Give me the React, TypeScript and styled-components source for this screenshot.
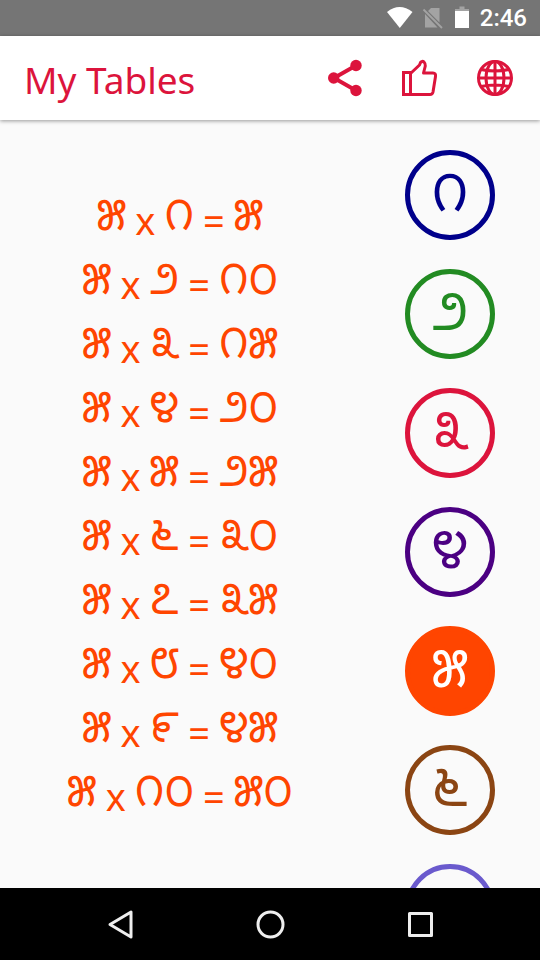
import React, { useState } from "react";
import styled, { createGlobalStyle } from "styled-components";

const GlobalStyle = createGlobalStyle`
  * { box-sizing: border-box; }
  body { margin: 0; background: #fafafa; }
  button { font: inherit; color: inherit; background: none; border: 0; padding: 0; cursor: pointer; }
  svg { display: block; }
`;

const Screen = styled.div`
  display: flex;
  flex-direction: column;
  height: 100vh;
  background: #fafafa;
  font-family: Roboto, "Noto Sans", sans-serif;
`;

const StatusBar = styled.div`
  flex: none;
  display: flex;
  align-items: center;
  justify-content: flex-end;
  height: 36px;
  padding-right: 13px;
  background: #757575;
  color: #fff;
`;

const StatusIcons = styled.div`
  display: flex;
  align-items: center;
  gap: 8px;
  margin-right: 8px;
`;

const Clock = styled.time`
  font-size: 24px;
  line-height: 36px;
  font-weight: 500;
`;

const Header = styled.header`
  flex: none;
  display: flex;
  align-items: center;
  justify-content: space-between;
  height: 84px;
  padding: 0 25px 0 24px;
  background: #fff;
  box-shadow: 0 1px 4px rgba(0, 0, 0, 0.4);
  color: #dc143c;
  z-index: 1;
`;

const Title = styled.h1`
  margin: 0;
  padding-top: 4px;
  font-family: "Noto Sans", sans-serif;
  font-size: 37px;
  line-height: 80px;
  font-weight: 400;
`;

const Actions = styled.div`
  display: flex;
  gap: 35px;
`;

const ActionButton = styled.button`
  width: 40px;
  height: 40px;
`;

const Content = styled.main`
  flex: 1;
  min-height: 0;
  display: grid;
  grid-template-columns: 2fr 1fr;
`;

const Equations = styled.section`
  display: flex;
  flex-direction: column;
  justify-content: center;
  color: #ff4500;
`;

const Equation = styled.p`
  display: flex;
  justify-content: center;
  align-items: center;
  gap: 9px;
  height: 64px;
  margin: 0;
`;

const Digits = styled.span`
  padding-top: 16px;
  font-family: "Noto Sans Kannada", "Noto Sans", sans-serif;
  font-size: 43px;
  line-height: 64px;
  font-weight: 400;
`;

const Sign = styled.span`
  padding-top: 8px;
  font-family: "Noto Sans", sans-serif;
  font-size: 38px;
  line-height: 56px;
`;

const Picker = styled.nav`
  display: flex;
  flex-direction: column;
  align-items: center;
  gap: 29px;
  padding: 30px 0;
  overflow-y: auto;
  scrollbar-width: none;
`;

const NumberButton = styled.button<{ $color: string; $active: boolean }>`
  && {
    flex: none;
    width: 90px;
    height: 90px;
    padding-top: 18px;
    border: 5px solid ${(p) => p.$color};
    border-radius: 50%;
    background: ${(p) => (p.$active ? p.$color : "transparent")};
    color: ${(p) => (p.$active ? "#fff" : p.$color)};
    font-family: "Noto Sans Kannada", "Noto Sans", sans-serif;
    font-size: 53px;
    line-height: 62px;
  }
`;

const NavBar = styled.nav`
  flex: none;
  display: flex;
  align-items: center;
  justify-content: center;
  gap: 110px;
  height: 72px;
  background: #000;
`;

const NavButton = styled.button`
  width: 40px;
  height: 40px;
`;

const COLORS = [
  "#00008b",
  "#228b22",
  "#dc143c",
  "#4b0082",
  "#ff4500",
  "#8b4513",
  "#6a5acd",
  "#c71585",
  "#008080",
  "#b8860b",
];

const toKannada = (n: number) =>
  String(n).replace(/\d/g, (d) => String.fromCharCode(0x0ce6 + Number(d)));

function StatusGlyphs() {
  return (
    <StatusIcons aria-hidden="true">
      <svg width="28" height="24" viewBox="0 0 28 24">
        <path d="M1 6Q13.500-4 26.500 6L13.800 22Z" fill="#fff" />
      </svg>
      <svg width="22" height="24" viewBox="0 0 22 24">
        <path d="M9 2H17.500V16.500L6 5ZM3 8 15.500 21.500H3Z" fill="#a3a3a3" />
        <path d="M1.500 3.500 20 22" stroke="#a3a3a3" strokeWidth="1.800" />
      </svg>
      <svg width="20" height="24" viewBox="0 0 20 24">
        <path d="M7.500 0.500H12.500V3H17V6H3V3H7.500Z" fill="#a3a3a3" />
        <path d="M3 5H17V22H3Z" fill="#fff" />
      </svg>
    </StatusIcons>
  );
}

function ShareIcon() {
  return (
    <svg width="40" height="40" viewBox="0 0 40 40" fill="currentColor">
      <path d="M31 7.500 9 20 31 32.500" fill="none" stroke="currentColor" strokeWidth="4" />
      <circle cx="31" cy="7.500" r="5.700" />
      <circle cx="8.700" cy="20" r="5.700" />
      <circle cx="31" cy="32.500" r="5.700" />
    </svg>
  );
}

function LikeIcon() {
  return (
    <svg width="40" height="40" viewBox="0 0 40 40" fill="none" stroke="currentColor" strokeWidth="3" strokeLinejoin="round">
      <path d="M3.500 14.500H10.500V36.500H3.500Z" strokeLinejoin="miter" />
      <path d="M10.500 36.500H30Q32.500 36.500 33 34L35.500 18.500Q36 15 33 15H23.500L25.300 8Q25.500 5.500 24 4Q22 2.500 20.500 4.500L19.500 7L10.500 15.500" />
    </svg>
  );
}

function GlobeIcon() {
  return (
    <svg width="40" height="40" viewBox="0 0 40 40" fill="none" stroke="currentColor" strokeWidth="3">
      <circle cx="20" cy="20" r="16.500" />
      <ellipse cx="20" cy="20" rx="9" ry="16.500" />
      <path d="M20 3V37M3 20H37M6 11.500Q20 14.500 34 11.500M6 28.500Q20 25.500 34 28.500" />
    </svg>
  );
}

export default function App() {
  const [selected, setSelected] = useState(5);
  const numbers = COLORS.map((_, i) => i + 1);

  return (
    <>
      <GlobalStyle />
      <Screen>
        <StatusBar>
          <StatusGlyphs />
          <Clock>2:46</Clock>
        </StatusBar>
        <Header>
          <Title>My Tables</Title>
          <Actions>
            <ActionButton aria-label="Share"><ShareIcon /></ActionButton>
            <ActionButton aria-label="Like"><LikeIcon /></ActionButton>
            <ActionButton aria-label="Language"><GlobeIcon /></ActionButton>
          </Actions>
        </Header>
        <Content>
          <Equations lang="kn">
            {numbers.map((n) => (
              <Equation key={n}>
                <Digits>{toKannada(selected)}</Digits>
                <Sign>x</Sign>
                <Digits>{toKannada(n)}</Digits>
                <Sign>=</Sign>
                <Digits>{toKannada(selected * n)}</Digits>
              </Equation>
            ))}
          </Equations>
          <Picker lang="kn" aria-label="Tables">
            {numbers.map((n) => (
              <NumberButton
                key={n}
                $color={COLORS[n - 1]}
                $active={n === selected}
                aria-pressed={n === selected}
                onClick={() => setSelected(n)}
              >
                {toKannada(n)}
              </NumberButton>
            ))}
          </Picker>
        </Content>
        <NavBar aria-label="System">
          <NavButton aria-label="Back">
            <svg width="40" height="40" viewBox="0 0 40 40" fill="none" stroke="#eee" strokeWidth="3" strokeLinejoin="round">
              <path d="M31 8V33L10 20.500Z" />
            </svg>
          </NavButton>
          <NavButton aria-label="Home">
            <svg width="40" height="40" viewBox="0 0 40 40" fill="none" stroke="#eee" strokeWidth="3">
              <circle cx="20.500" cy="20.500" r="12.500" />
            </svg>
          </NavButton>
          <NavButton aria-label="Recent apps">
            <svg width="40" height="40" viewBox="0 0 40 40" fill="none" stroke="#eee" strokeWidth="3" strokeLinejoin="round">
              <path d="M9.500 9.500H31.500V31.500H9.500Z" />
            </svg>
          </NavButton>
        </NavBar>
      </Screen>
    </>
  );
}
